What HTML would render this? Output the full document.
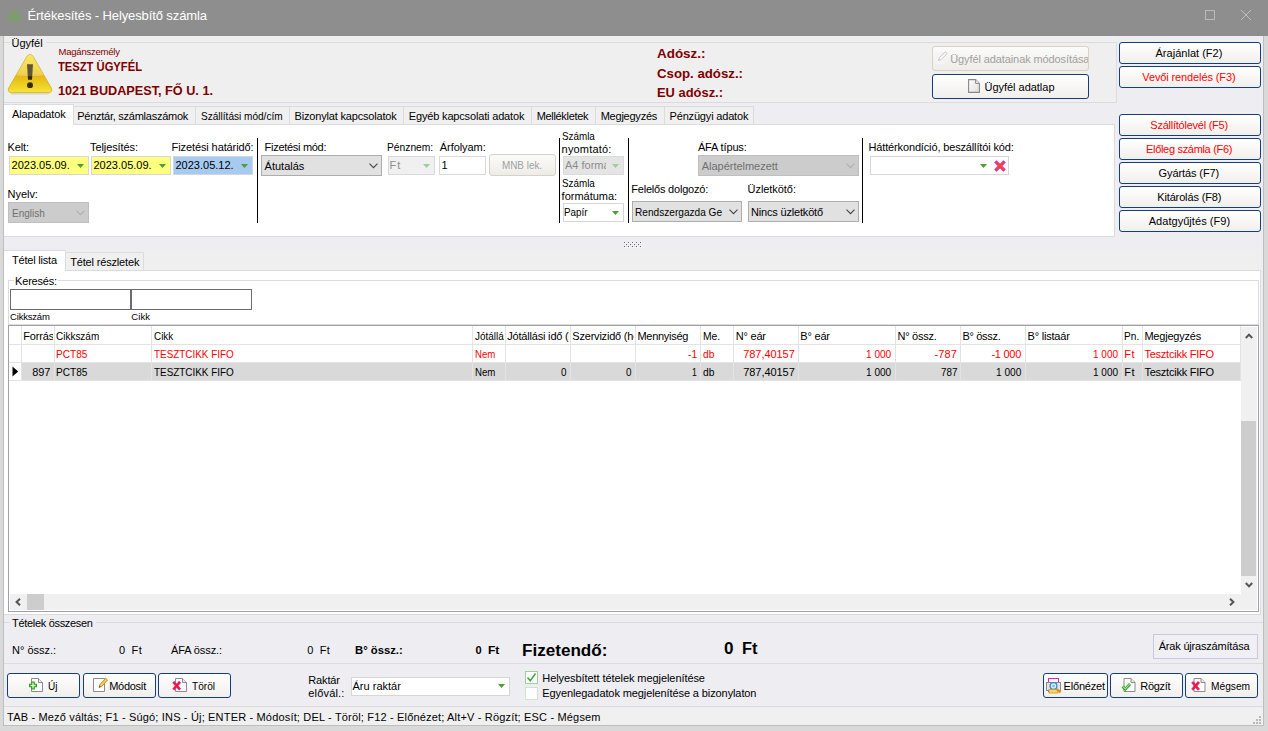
<!DOCTYPE html>
<html><head><meta charset="utf-8"><title>Értékesítés - Helyesbítő számla</title>
<style>
html,body{margin:0;padding:0;background:#dcdcdc;}
body{width:1268px;height:731px;overflow:hidden;font-family:"Liberation Sans", sans-serif;font-size:11px;}
#win{position:relative;width:1268px;height:731px;overflow:hidden;}
#win div,#win svg{position:absolute;}
#win .t{font-family:"Liberation Sans", sans-serif;}
</style></head><body>
<div id="win">
<div style="left:0px;top:0px;width:1268px;height:731px;background:#d9d9d9;"></div>
<div style="left:3px;top:36px;width:1261px;height:690px;background:#bebebe;"></div>
<div style="left:4px;top:36px;width:1259px;height:689px;background:#ededf2;"></div>
<div style="left:0px;top:0px;width:1268px;height:36px;background:#8e8e8e;"></div>
<div class="t" style="top:8px;font-size:13px;line-height:15px;color:#fff;white-space:nowrap;letter-spacing:-0.110px;left:27.5px;">Értékesítés - Helyesbítő számla</div>
<svg style="left:6px;top:8px" width="16" height="16" viewBox="0 0 16 16"><g fill="none" stroke="#6cae4a" stroke-width="1.25" stroke-linecap="round"><path d="M3.5 4.5 Q8 9.5 12.5 4.5"/><path d="M8 7.5 V13.5"/><path d="M2 8.5 Q5 8 6.5 13"/><path d="M14 8.5 Q11 8 9.5 13"/></g><g fill="#6cae4a"><circle cx="6.3" cy="2.6" r="0.9"/><circle cx="9.7" cy="2.6" r="0.9"/><circle cx="1.6" cy="11.6" r="0.8"/><circle cx="14.4" cy="11.6" r="0.8"/><circle cx="3.6" cy="13.6" r="0.8"/><circle cx="12.4" cy="13.6" r="0.8"/></g></svg>
<div style="left:1205px;top:10px;width:10px;height:10px;border:1px solid #b9b9b9;box-sizing:border-box;"></div>
<svg style="left:1240px;top:9px" width="12" height="12" viewBox="0 0 12 12"><path d="M1 1 L11 11 M11 1 L1 11" stroke="#bdbdbd" stroke-width="1" fill="none"/></svg>
<div style="left:4px;top:36px;width:1113px;height:67px;background:#efefef;"></div>
<div style="left:4px;top:42px;width:1113px;height:61px;border:1px solid #dcdcdc;border-left:none;box-sizing:border-box;"></div>
<div style="left:10px;top:36px;width:36px;height:14px;background:#efefef;"></div>
<div class="t" style="top:37px;font-size:11px;line-height:12px;color:#000;white-space:nowrap;left:11.5px;">Ügyfél</div>
<svg style="left:6px;top:52px" width="48" height="44" viewBox="0 0 48 44">
<defs><linearGradient id="wg" x1="0" y1="0" x2="0" y2="1"><stop offset="0" stop-color="#f6e23e"/><stop offset="0.5" stop-color="#edc62c"/><stop offset="0.57" stop-color="#e5b716"/><stop offset="0.9" stop-color="#f2da2a"/><stop offset="1" stop-color="#f5e440"/></linearGradient>
<clipPath id="wc"><path d="M24 2.5 Q26 2.5 27.2 4.6 L45.2 35.8 Q47 40.5 42.5 40.6 L5.5 40.6 Q1 40.5 2.8 35.8 L20.8 4.6 Q22 2.5 24 2.5 Z"/></clipPath></defs>
<path d="M6 41.2 H42 Q45 41.6 42 42.6 H6 Q3 41.6 6 41.2 Z" fill="#9a9aa0" opacity="0.35"/>
<path d="M24 2.5 Q26 2.5 27.2 4.6 L45.2 35.8 Q47 40.5 42.5 40.6 L5.5 40.6 Q1 40.5 2.8 35.8 L20.8 4.6 Q22 2.5 24 2.5 Z" fill="url(#wg)" stroke="#d6b422" stroke-width="0.9"/>
<path d="M21 12.3 H27 L26 27.8 H22 Z" fill="#342c00"/>
<ellipse cx="24" cy="33.2" rx="3" ry="2.9" fill="#342c00"/>
<path d="M0 0 H48 V21 Q24 27.5 0 21 Z" fill="#fff" opacity="0.2" clip-path="url(#wc)"/>
</svg>
<div class="t" style="top:46px;font-size:9.5px;line-height:11px;color:#800000;white-space:nowrap;letter-spacing:-0.217px;left:58.5px;">Magánszemély</div>
<div class="t" style="top:60px;font-size:12px;line-height:14px;color:#800000;white-space:nowrap;font-weight:bold;left:58px;"><span style="display:inline-block;transform:scaleX(0.9333);transform-origin:0 0;">TESZT ÜGYFÉL</span></div>
<div class="t" style="top:84px;font-size:12px;line-height:14px;color:#800000;white-space:nowrap;font-weight:bold;left:58px;"><span style="display:inline-block;transform:scaleX(1.0564);transform-origin:0 0;">1021 BUDAPEST, FŐ U. 1.</span></div>
<div class="t" style="top:47px;font-size:12px;line-height:14px;color:#800000;white-space:nowrap;font-weight:bold;left:657px;"><span style="display:inline-block;transform:scaleX(1.1190);transform-origin:0 0;">Adósz.:</span></div>
<div class="t" style="top:67px;font-size:12px;line-height:14px;color:#800000;white-space:nowrap;font-weight:bold;left:657px;"><span style="display:inline-block;transform:scaleX(1.1023);transform-origin:0 0;">Csop. adósz.:</span></div>
<div class="t" style="top:86px;font-size:12px;line-height:14px;color:#800000;white-space:nowrap;font-weight:bold;left:657px;"><span style="display:inline-block;transform:scaleX(1.0759);transform-origin:0 0;">EU adósz.:</span></div>
<div style="left:932px;top:46px;width:157px;height:25px;border:1px solid #d8d1c6;border-radius:3px;box-sizing:border-box;background:linear-gradient(#fbfbfb,#eeece8);"></div>
<svg style="left:934px;top:50px" width="15" height="15" viewBox="0 0 15 15"><rect x="1" y="2" width="10" height="12" fill="#f4f4f4"/><path d="M4.5 10.5 L5.3 7.8 L11.3 1.8 L13.2 3.6 L7.2 9.6 Z" fill="#f8f8f8" stroke="#c2c2c2" stroke-width="0.9"/></svg>
<div class="t" style="top:53px;font-size:11px;line-height:12px;color:#a0a0a0;white-space:nowrap;letter-spacing:-0.099px;left:950.2px;width:137.5px;overflow:hidden;">Ügyfél adatainak módosítása</div>
<div style="left:932px;top:74px;width:157px;height:25px;border:1px solid #123f7a;border-radius:3px;box-sizing:border-box;background:linear-gradient(#ffffff,#f1efec);"></div>
<svg style="left:968px;top:79px" width="12" height="14" viewBox="0 0 12 14"><defs><linearGradient id="dg" x1="0" y1="0" x2="1" y2="1"><stop offset="0" stop-color="#ffffff"/><stop offset="1" stop-color="#dedede"/></linearGradient></defs><path d="M0.6 0.6 H7.6 L11.4 4.4 V13.4 H0.6 Z" fill="url(#dg)" stroke="#888" stroke-width="1.1"/><path d="M7.6 0.6 V4.4 H11.4" fill="#eee" stroke="#888" stroke-width="1"/></svg>
<div class="t" style="top:81px;font-size:11px;line-height:12px;color:#000;white-space:nowrap;letter-spacing:-0.025px;left:984.5px;">Ügyfél adatlap</div>
<div style="left:1119px;top:42px;width:142px;height:22px;border:1px solid #123f7a;border-radius:3px;box-sizing:border-box;background:linear-gradient(#ffffff,#f1efec);"></div>
<div class="t" style="top:47px;font-size:11px;line-height:12px;color:#000;white-space:nowrap;letter-spacing:0.020px;left:1155.5px;">Árajánlat (F2)</div>
<div style="left:1119px;top:66px;width:142px;height:22px;border:1px solid #123f7a;border-radius:3px;box-sizing:border-box;background:linear-gradient(#ffffff,#f1efec);"></div>
<div class="t" style="top:71px;font-size:11px;line-height:12px;color:#ff0000;white-space:nowrap;letter-spacing:-0.116px;left:1142.3px;">Vevői rendelés (F3)</div>
<div style="left:1119px;top:114px;width:142px;height:22px;border:1px solid #123f7a;border-radius:3px;box-sizing:border-box;background:linear-gradient(#ffffff,#f1efec);"></div>
<div class="t" style="top:119px;font-size:11px;line-height:12px;color:#ff0000;white-space:nowrap;letter-spacing:-0.242px;left:1150.3px;">Szállítólevél (F5)</div>
<div style="left:1119px;top:138px;width:142px;height:22px;border:1px solid #123f7a;border-radius:3px;box-sizing:border-box;background:linear-gradient(#ffffff,#f1efec);"></div>
<div class="t" style="top:143px;font-size:11px;line-height:12px;color:#ff0000;white-space:nowrap;letter-spacing:-0.312px;left:1146px;">Előleg számla (F6)</div>
<div style="left:1119px;top:162px;width:142px;height:22px;border:1px solid #123f7a;border-radius:3px;box-sizing:border-box;background:linear-gradient(#ffffff,#f1efec);"></div>
<div class="t" style="top:167px;font-size:11px;line-height:12px;color:#000;white-space:nowrap;letter-spacing:-0.103px;left:1158.6px;">Gyártás (F7)</div>
<div style="left:1119px;top:186px;width:142px;height:22px;border:1px solid #123f7a;border-radius:3px;box-sizing:border-box;background:linear-gradient(#ffffff,#f1efec);"></div>
<div class="t" style="top:191px;font-size:11px;line-height:12px;color:#000;white-space:nowrap;letter-spacing:-0.133px;left:1157.2px;">Kitárolás (F8)</div>
<div style="left:1119px;top:210px;width:142px;height:22px;border:1px solid #123f7a;border-radius:3px;box-sizing:border-box;background:linear-gradient(#ffffff,#f1efec);"></div>
<div class="t" style="top:215px;font-size:11px;line-height:12px;color:#000;white-space:nowrap;letter-spacing:0.046px;left:1148.7px;">Adatgyűjtés (F9)</div>
<div style="left:4px;top:124px;width:1111px;height:113px;background:#fff;border:1px solid #dcdcdc;border-left:none;box-sizing:border-box;"></div>
<div style="left:4px;top:104px;width:70px;height:21px;background:#fff;border:1px solid #dcdcdc;border-bottom:none;border-left:none;box-sizing:border-box;"></div>
<div class="t" style="top:108px;font-size:11px;line-height:12px;color:#000;white-space:nowrap;letter-spacing:-0.150px;left:12px;">Alapadatok</div>
<div style="left:73px;top:106px;width:122.5px;height:19px;background:#f0f0f0;border:1px solid #dcdcdc;box-sizing:border-box;"></div>
<div class="t" style="top:110px;font-size:11px;line-height:12px;color:#000;white-space:nowrap;letter-spacing:-0.253px;left:77.2px;">Pénztár, számlaszámok</div>
<div style="left:194.5px;top:106px;width:95.0px;height:19px;background:#f0f0f0;border:1px solid #dcdcdc;box-sizing:border-box;"></div>
<div class="t" style="top:110px;font-size:11px;line-height:12px;color:#000;white-space:nowrap;left:200.6px;"><span style="display:inline-block;transform:scaleX(0.9143);transform-origin:0 0;">Szállítási mód/cím</span></div>
<div style="left:288.5px;top:106px;width:115.5px;height:19px;background:#f0f0f0;border:1px solid #dcdcdc;box-sizing:border-box;"></div>
<div class="t" style="top:110px;font-size:11px;line-height:12px;color:#000;white-space:nowrap;letter-spacing:-0.184px;left:294.6px;">Bizonylat kapcsolatok</div>
<div style="left:403px;top:106px;width:128.5px;height:19px;background:#f0f0f0;border:1px solid #dcdcdc;box-sizing:border-box;"></div>
<div class="t" style="top:110px;font-size:11px;line-height:12px;color:#000;white-space:nowrap;letter-spacing:-0.166px;left:408.8px;">Egyéb kapcsolati adatok</div>
<div style="left:530.5px;top:106px;width:65.0px;height:19px;background:#f0f0f0;border:1px solid #dcdcdc;box-sizing:border-box;"></div>
<div class="t" style="top:110px;font-size:11px;line-height:12px;color:#000;white-space:nowrap;letter-spacing:-0.323px;left:536.7px;">Mellékletek</div>
<div style="left:594.5px;top:106px;width:70.0px;height:19px;background:#f0f0f0;border:1px solid #dcdcdc;box-sizing:border-box;"></div>
<div class="t" style="top:110px;font-size:11px;line-height:12px;color:#000;white-space:nowrap;letter-spacing:-0.234px;left:600.7px;">Megjegyzés</div>
<div style="left:663.5px;top:106px;width:90.0px;height:19px;background:#f0f0f0;border:1px solid #dcdcdc;box-sizing:border-box;"></div>
<div class="t" style="top:110px;font-size:11px;line-height:12px;color:#000;white-space:nowrap;letter-spacing:-0.182px;left:669.6px;">Pénzügyi adatok</div>
<div class="t" style="top:141px;font-size:11px;line-height:12px;color:#000;white-space:nowrap;letter-spacing:-0.154px;left:7.6px;">Kelt:</div>
<div class="t" style="top:141px;font-size:11px;line-height:12px;color:#000;white-space:nowrap;letter-spacing:-0.102px;left:90.1px;">Teljesítés:</div>
<div class="t" style="top:141px;font-size:11px;line-height:12px;color:#000;white-space:nowrap;letter-spacing:-0.104px;left:171.6px;">Fizetési határidő:</div>
<div style="left:9px;top:156px;width:80px;height:19px;background:#ffff80;border:1px solid #d6d6dc;box-sizing:border-box;"></div>
<div class="t" style="top:159px;font-size:11px;line-height:12px;color:#000;white-space:nowrap;letter-spacing:0.008px;left:11.5px;">2023.05.09.</div>
<svg style="left:77px;top:164px" width="7" height="4" viewBox="0 0 7 4"><path d="M0 0 H7 L3.5 4 Z" fill="#4a9e34"/></svg>
<div style="left:91px;top:156px;width:80px;height:19px;background:#ffff80;border:1px solid #d6d6dc;box-sizing:border-box;"></div>
<div class="t" style="top:159px;font-size:11px;line-height:12px;color:#000;white-space:nowrap;letter-spacing:0.007px;left:93.5px;">2023.05.09.</div>
<svg style="left:159px;top:164px" width="7" height="4" viewBox="0 0 7 4"><path d="M0 0 H7 L3.5 4 Z" fill="#4a9e34"/></svg>
<div style="left:173px;top:156px;width:80px;height:19px;background:#a6caf0;border:1px solid #d6d6dc;box-sizing:border-box;"></div>
<div class="t" style="top:159px;font-size:11px;line-height:12px;color:#000;white-space:nowrap;letter-spacing:0.007px;left:175.5px;">2023.05.12.</div>
<svg style="left:241px;top:164px" width="7" height="4" viewBox="0 0 7 4"><path d="M0 0 H7 L3.5 4 Z" fill="#4a9e34"/></svg>
<div class="t" style="top:188px;font-size:11px;line-height:12px;color:#000;white-space:nowrap;letter-spacing:-0.053px;left:7.6px;">Nyelv:</div>
<div style="left:8px;top:202px;width:81px;height:21px;background:#cccccc;border:1px solid #bfbfbf;box-sizing:border-box;"></div>
<div class="t" style="top:207px;font-size:11px;line-height:12px;color:#707070;white-space:nowrap;left:11.6px;"><span style="display:inline-block;transform:scaleX(0.9091);transform-origin:0 0;">English</span></div>
<svg style="left:75.5px;top:210px" width="9" height="6" viewBox="0 0 9 6"><path d="M0.5 0.7 L4.5 4.7 L8.5 0.7" fill="none" stroke="#b0b0b0" stroke-width="1.1"/></svg>
<div style="left:257px;top:138px;width:1px;height:85px;background:#000;"></div>
<div style="left:559px;top:138px;width:1px;height:85px;background:#000;"></div>
<div style="left:628px;top:138px;width:1px;height:85px;background:#000;"></div>
<div style="left:862px;top:138px;width:1px;height:85px;background:#000;"></div>
<div class="t" style="top:141px;font-size:11px;line-height:12px;color:#000;white-space:nowrap;letter-spacing:-0.293px;left:264.6px;">Fizetési mód:</div>
<div style="left:261px;top:155px;width:121px;height:21px;background:#e1e1e1;border:1px solid #adadad;box-sizing:border-box;"></div>
<div class="t" style="top:160px;font-size:11px;line-height:12px;color:#000;white-space:nowrap;letter-spacing:-0.007px;left:264.6px;">Átutalás</div>
<svg style="left:368.5px;top:163px" width="9" height="6" viewBox="0 0 9 6"><path d="M0.5 0.7 L4.5 4.7 L8.5 0.7" fill="none" stroke="#444" stroke-width="1.1"/></svg>
<div class="t" style="top:141px;font-size:11px;line-height:12px;color:#000;white-space:nowrap;left:386.5px;"><span style="display:inline-block;transform:scaleX(0.9327);transform-origin:0 0;">Pénznem:</span></div>
<div style="left:388px;top:156px;width:47px;height:19px;background:#f0f0f0;border:1px solid #d9d9d9;box-sizing:border-box;"></div>
<div class="t" style="top:159px;font-size:11px;line-height:12px;color:#8c8c8c;white-space:nowrap;letter-spacing:0.819px;left:389.6px;">Ft</div>
<svg style="left:423px;top:164px" width="7" height="4" viewBox="0 0 7 4"><path d="M0 0 H7 L3.5 4 Z" fill="#9ccf9c"/></svg>
<div class="t" style="top:141px;font-size:11px;line-height:12px;color:#000;white-space:nowrap;letter-spacing:-0.071px;left:439.8px;">Árfolyam:</div>
<div style="left:439px;top:156px;width:47px;height:19px;background:#fff;border:1px solid #d9d9d9;box-sizing:border-box;"></div>
<div class="t" style="top:159px;font-size:11px;line-height:12px;color:#000;white-space:nowrap;left:441.5px;">1</div>
<div style="left:489px;top:154px;width:67px;height:22px;border:1px solid #d8d1c6;border-radius:3px;box-sizing:border-box;background:linear-gradient(#fbfbfb,#eeece8);"></div>
<div class="t" style="top:159px;font-size:11px;line-height:12px;color:#a0a0a0;white-space:nowrap;left:501.6px;"><span style="display:inline-block;transform:scaleX(0.8986);transform-origin:0 0;">MNB lek.</span></div>
<div class="t" style="top:130px;font-size:11px;line-height:12px;color:#000;white-space:nowrap;left:561.6px;"><span style="display:inline-block;transform:scaleX(0.8940);transform-origin:0 0;">Számla</span></div>
<div class="t" style="top:143px;font-size:11px;line-height:12px;color:#000;white-space:nowrap;letter-spacing:0.173px;left:561.6px;">nyomtató:</div>
<div style="left:563px;top:156px;width:61px;height:19px;background:#e4e4e4;border:1px solid #dcdcdc;box-sizing:border-box;overflow:hidden;"></div>
<div class="t" style="top:159px;font-size:11px;line-height:12px;color:#8c8c8c;white-space:nowrap;left:565px;width:41px;overflow:hidden;">A4 formá</div>
<svg style="left:612px;top:164px" width="7" height="4" viewBox="0 0 7 4"><path d="M0 0 H7 L3.5 4 Z" fill="#9ccf9c"/></svg>
<div class="t" style="top:177px;font-size:11px;line-height:12px;color:#000;white-space:nowrap;left:561.6px;"><span style="display:inline-block;transform:scaleX(0.8940);transform-origin:0 0;">Számla</span></div>
<div class="t" style="top:190px;font-size:11px;line-height:12px;color:#000;white-space:nowrap;letter-spacing:-0.016px;left:561.6px;">formátuma:</div>
<div style="left:563px;top:203px;width:61px;height:19px;background:#fff;border:1px solid #d6d6d6;box-sizing:border-box;"></div>
<div class="t" style="top:206px;font-size:11px;line-height:12px;color:#000;white-space:nowrap;left:564.4px;"><span style="display:inline-block;transform:scaleX(0.8936);transform-origin:0 0;">Papír</span></div>
<svg style="left:612px;top:211px" width="7" height="4" viewBox="0 0 7 4"><path d="M0 0 H7 L3.5 4 Z" fill="#4a9e34"/></svg>
<div class="t" style="top:141px;font-size:11px;line-height:12px;color:#000;white-space:nowrap;letter-spacing:-0.138px;left:697.9px;">ÁFA típus:</div>
<div style="left:698px;top:155px;width:161px;height:21px;background:#cccccc;border:1px solid #bfbfbf;box-sizing:border-box;"></div>
<div class="t" style="top:160px;font-size:11px;line-height:12px;color:#707070;white-space:nowrap;letter-spacing:-0.017px;left:701.7px;">Alapértelmezett</div>
<svg style="left:845.5px;top:163px" width="9" height="6" viewBox="0 0 9 6"><path d="M0.5 0.7 L4.5 4.7 L8.5 0.7" fill="none" stroke="#b0b0b0" stroke-width="1.1"/></svg>
<div class="t" style="top:183px;font-size:11px;line-height:12px;color:#000;white-space:nowrap;letter-spacing:-0.214px;left:631.3px;">Felelős dolgozó:</div>
<div style="left:632px;top:201px;width:110px;height:21px;background:#e1e1e1;border:1px solid #adadad;box-sizing:border-box;"></div>
<div class="t" style="top:206px;font-size:11px;line-height:12px;color:#000;white-space:nowrap;left:635.3px;width:87.5px;overflow:hidden;"><span style="display:inline-block;transform:scaleX(0.9191);transform-origin:0 0;">Rendszergazda Ge</span></div>
<svg style="left:728.5px;top:209px" width="9" height="6" viewBox="0 0 9 6"><path d="M0.5 0.7 L4.5 4.7 L8.5 0.7" fill="none" stroke="#444" stroke-width="1.1"/></svg>
<div class="t" style="top:183px;font-size:11px;line-height:12px;color:#000;white-space:nowrap;letter-spacing:-0.058px;left:747.6px;">Üzletkötő:</div>
<div style="left:748px;top:201px;width:111px;height:21px;background:#e1e1e1;border:1px solid #adadad;box-sizing:border-box;"></div>
<div class="t" style="top:206px;font-size:11px;line-height:12px;color:#000;white-space:nowrap;letter-spacing:-0.185px;left:751.1px;">Nincs üzletkötő</div>
<svg style="left:845.5px;top:209px" width="9" height="6" viewBox="0 0 9 6"><path d="M0.5 0.7 L4.5 4.7 L8.5 0.7" fill="none" stroke="#444" stroke-width="1.1"/></svg>
<div class="t" style="top:141px;font-size:11px;line-height:12px;color:#000;white-space:nowrap;letter-spacing:-0.146px;left:868.5px;">Háttérkondíció, beszállítói kód:</div>
<div style="left:870px;top:156px;width:139px;height:19px;background:#fff;border:1px solid #d6d6d6;box-sizing:border-box;"></div>
<svg style="left:980px;top:164px" width="7" height="4" viewBox="0 0 7 4"><path d="M0 0 H7 L3.5 4 Z" fill="#4a9e34"/></svg>
<svg style="left:994px;top:160px" width="12" height="12" viewBox="0 0 12 12"><path d="M2.6 2.6 L9.4 9.4 M9.4 2.6 L2.6 9.4" stroke="#e614e0" stroke-width="3.4" stroke-linecap="square"/><path d="M2.6 2.6 L9.4 9.4 M9.4 2.6 L2.6 9.4" stroke="#f0501c" stroke-width="1.9" stroke-linecap="square"/></svg>
<svg style="left:624px;top:242px" width="19" height="7" viewBox="0 0 19 7"><rect x="1" y="1" width="1" height="1" fill="#fbfbfb"/><rect x="0" y="0" width="1" height="1" fill="#666"/><rect x="5" y="1" width="1" height="1" fill="#fbfbfb"/><rect x="4" y="0" width="1" height="1" fill="#666"/><rect x="9" y="1" width="1" height="1" fill="#fbfbfb"/><rect x="8" y="0" width="1" height="1" fill="#666"/><rect x="13" y="1" width="1" height="1" fill="#fbfbfb"/><rect x="12" y="0" width="1" height="1" fill="#666"/><rect x="17" y="1" width="1" height="1" fill="#fbfbfb"/><rect x="16" y="0" width="1" height="1" fill="#666"/><rect x="3" y="3" width="1" height="1" fill="#fbfbfb"/><rect x="2" y="2" width="1" height="1" fill="#666"/><rect x="7" y="3" width="1" height="1" fill="#fbfbfb"/><rect x="6" y="2" width="1" height="1" fill="#666"/><rect x="11" y="3" width="1" height="1" fill="#fbfbfb"/><rect x="10" y="2" width="1" height="1" fill="#666"/><rect x="15" y="3" width="1" height="1" fill="#fbfbfb"/><rect x="14" y="2" width="1" height="1" fill="#666"/><rect x="1" y="5" width="1" height="1" fill="#fbfbfb"/><rect x="0" y="4" width="1" height="1" fill="#666"/><rect x="5" y="5" width="1" height="1" fill="#fbfbfb"/><rect x="4" y="4" width="1" height="1" fill="#666"/><rect x="9" y="5" width="1" height="1" fill="#fbfbfb"/><rect x="8" y="4" width="1" height="1" fill="#666"/><rect x="13" y="5" width="1" height="1" fill="#fbfbfb"/><rect x="12" y="4" width="1" height="1" fill="#666"/><rect x="17" y="5" width="1" height="1" fill="#fbfbfb"/><rect x="16" y="4" width="1" height="1" fill="#666"/></svg>
<div style="left:4px;top:250px;width:1257px;height:21px;background:#efefef;"></div>
<div style="left:4px;top:270px;width:1257px;height:345px;background:#fff;border:1px solid #dcdcdc;border-left:none;box-sizing:border-box;"></div>
<div style="left:4px;top:250px;width:62px;height:21px;background:#fff;border:1px solid #dcdcdc;border-bottom:none;border-left:none;box-sizing:border-box;"></div>
<div class="t" style="top:254px;font-size:11px;line-height:12px;color:#000;white-space:nowrap;letter-spacing:-0.208px;left:12.1px;">Tétel lista</div>
<div style="left:65px;top:252px;width:79px;height:19px;background:#f0f0f0;border:1px solid #dcdcdc;box-sizing:border-box;"></div>
<div class="t" style="top:256px;font-size:11px;line-height:12px;color:#000;white-space:nowrap;letter-spacing:-0.167px;left:70.2px;">Tétel részletek</div>
<div style="left:8px;top:280px;width:1251px;height:45px;border:1px solid #dcdcdc;box-sizing:border-box;"></div>
<div style="left:14px;top:274px;width:44px;height:12px;background:#fff;"></div>
<div class="t" style="top:275px;font-size:11px;line-height:12px;color:#000;white-space:nowrap;letter-spacing:-0.203px;left:15.1px;">Keresés:</div>
<div style="left:10px;top:289px;width:121px;height:21px;background:#fff;border:1px solid #6b6b6b;box-sizing:border-box;"></div>
<div style="left:131px;top:289px;width:121px;height:21px;background:#fff;border:1px solid #6b6b6b;box-sizing:border-box;"></div>
<div class="t" style="top:311px;font-size:9.5px;line-height:11px;color:#000;white-space:nowrap;letter-spacing:-0.210px;left:10.1px;">Cikkszám</div>
<div class="t" style="top:311px;font-size:9.5px;line-height:11px;color:#000;white-space:nowrap;letter-spacing:0.072px;left:131.3px;">Cikk</div>
<div style="left:8px;top:325px;width:1251px;height:287px;background:#fff;border:1px solid #a0a0a8;box-sizing:border-box;"></div>
<div style="left:21px;top:362px;width:1219.5px;height:19px;background:#d9d9d9;"></div>
<div style="left:9px;top:344px;width:1231.5px;height:1px;background:#e3e3e3;"></div>
<div style="left:9px;top:362px;width:1231.5px;height:1px;background:#e3e3e3;"></div>
<div style="left:9px;top:380px;width:1231.5px;height:1px;background:#e3e3e3;"></div>
<div style="left:20.5px;top:326px;width:1px;height:55px;background:#e3e3e3;"></div>
<div style="left:53.5px;top:326px;width:1px;height:55px;background:#e3e3e3;"></div>
<div style="left:151.0px;top:326px;width:1px;height:55px;background:#e3e3e3;"></div>
<div style="left:472.0px;top:326px;width:1px;height:55px;background:#e3e3e3;"></div>
<div style="left:504.5px;top:326px;width:1px;height:55px;background:#e3e3e3;"></div>
<div style="left:569.5px;top:326px;width:1px;height:55px;background:#e3e3e3;"></div>
<div style="left:634.5px;top:326px;width:1px;height:55px;background:#e3e3e3;"></div>
<div style="left:700.0px;top:326px;width:1px;height:55px;background:#e3e3e3;"></div>
<div style="left:733.0px;top:326px;width:1px;height:55px;background:#e3e3e3;"></div>
<div style="left:797.5px;top:326px;width:1px;height:55px;background:#e3e3e3;"></div>
<div style="left:895.0px;top:326px;width:1px;height:55px;background:#e3e3e3;"></div>
<div style="left:959.5px;top:326px;width:1px;height:55px;background:#e3e3e3;"></div>
<div style="left:1025.0px;top:326px;width:1px;height:55px;background:#e3e3e3;"></div>
<div style="left:1121.5px;top:326px;width:1px;height:55px;background:#e3e3e3;"></div>
<div style="left:1142.0px;top:326px;width:1px;height:55px;background:#e3e3e3;"></div>
<div style="left:1240.0px;top:326px;width:1px;height:55px;background:#e3e3e3;"></div>
<div class="t" style="top:330px;font-size:11px;line-height:12px;color:#000;white-space:nowrap;letter-spacing:-0.120px;left:23.2px;width:30.3px;overflow:hidden;">Forrás</div>
<div class="t" style="top:330px;font-size:11px;line-height:12px;color:#000;white-space:nowrap;left:56px;width:95.0px;overflow:hidden;"><span style="display:inline-block;transform:scaleX(0.9062);transform-origin:0 0;">Cikkszám</span></div>
<div class="t" style="top:330px;font-size:11px;line-height:12px;color:#000;white-space:nowrap;left:153.5px;width:318.5px;overflow:hidden;"><span style="display:inline-block;transform:scaleX(0.8976);transform-origin:0 0;">Cikk</span></div>
<div class="t" style="top:330px;font-size:11px;line-height:12px;color:#000;white-space:nowrap;left:474.6px;width:29.9px;overflow:hidden;"><span style="display:inline-block;transform:scaleX(0.9026);transform-origin:0 0;">Jótállás</span></div>
<div class="t" style="top:330px;font-size:11px;line-height:12px;color:#000;white-space:nowrap;letter-spacing:-0.186px;left:507.2px;width:62.3px;overflow:hidden;">Jótállási idő (hó)</div>
<div class="t" style="top:330px;font-size:11px;line-height:12px;color:#000;white-space:nowrap;letter-spacing:-0.207px;left:572.3px;width:62.2px;overflow:hidden;">Szervizidő (hó)</div>
<div class="t" style="top:330px;font-size:11px;line-height:12px;color:#000;white-space:nowrap;letter-spacing:-0.263px;left:637.4px;width:62.6px;overflow:hidden;">Mennyiség</div>
<div class="t" style="top:330px;font-size:11px;line-height:12px;color:#000;white-space:nowrap;left:702.6px;width:30.4px;overflow:hidden;"><span style="display:inline-block;transform:scaleX(0.9376);transform-origin:0 0;">Me.</span></div>
<div class="t" style="top:330px;font-size:11px;line-height:12px;color:#000;white-space:nowrap;letter-spacing:-0.203px;left:735.7px;width:61.8px;overflow:hidden;">N° eár</div>
<div class="t" style="top:330px;font-size:11px;line-height:12px;color:#000;white-space:nowrap;letter-spacing:-0.201px;left:800.3px;width:94.7px;overflow:hidden;">B° eár</div>
<div class="t" style="top:330px;font-size:11px;line-height:12px;color:#000;white-space:nowrap;letter-spacing:-0.268px;left:897.5px;width:62.0px;overflow:hidden;">N° össz.</div>
<div class="t" style="top:330px;font-size:11px;line-height:12px;color:#000;white-space:nowrap;letter-spacing:-0.296px;left:962.4px;width:62.6px;overflow:hidden;">B° össz.</div>
<div class="t" style="top:330px;font-size:11px;line-height:12px;color:#000;white-space:nowrap;letter-spacing:-0.205px;left:1027.5px;width:94.0px;overflow:hidden;">B° listaár</div>
<div class="t" style="top:330px;font-size:11px;line-height:12px;color:#000;white-space:nowrap;left:1124.3px;width:17.7px;overflow:hidden;"><span style="display:inline-block;transform:scaleX(0.9203);transform-origin:0 0;">Pn.</span></div>
<div class="t" style="top:330px;font-size:11px;line-height:12px;color:#000;white-space:nowrap;letter-spacing:-0.211px;left:1144.4px;width:95.6px;overflow:hidden;">Megjegyzés</div>
<div class="t" style="top:348px;font-size:11px;line-height:12px;color:#ff0000;white-space:nowrap;left:56px;"><span style="display:inline-block;transform:scaleX(0.9168);transform-origin:0 0;">PCT85</span></div>
<div class="t" style="top:348px;font-size:11px;line-height:12px;color:#ff0000;white-space:nowrap;left:153.5px;"><span style="display:inline-block;transform:scaleX(0.9004);transform-origin:0 0;">TESZTCIKK FIFO</span></div>
<div class="t" style="top:348px;font-size:11px;line-height:12px;color:#ff0000;white-space:nowrap;left:474.6px;"><span style="display:inline-block;transform:scaleX(0.8780);transform-origin:0 0;">Nem</span></div>
<div class="t" style="top:348px;font-size:11px;line-height:12px;color:#ff0000;white-space:nowrap;left:687.5px;"><span style="display:inline-block;transform:scaleX(0.9304);transform-origin:0 0;">-1</span></div>
<div class="t" style="top:348px;font-size:11px;line-height:12px;color:#ff0000;white-space:nowrap;left:702.6px;"><span style="display:inline-block;transform:scaleX(0.9306);transform-origin:0 0;">db</span></div>
<div class="t" style="top:348px;font-size:11px;line-height:12px;color:#ff0000;white-space:nowrap;letter-spacing:-0.050px;left:743.2px;">787,40157</div>
<div class="t" style="top:348px;font-size:11px;line-height:12px;color:#ff0000;white-space:nowrap;left:866px;"><span style="display:inline-block;transform:scaleX(0.9153);transform-origin:0 0;">1 000</span></div>
<div class="t" style="top:348px;font-size:11px;line-height:12px;color:#ff0000;white-space:nowrap;letter-spacing:0.090px;left:934.6px;">-787</div>
<div class="t" style="top:348px;font-size:11px;line-height:12px;color:#ff0000;white-space:nowrap;letter-spacing:-0.261px;left:991.4px;">-1 000</div>
<div class="t" style="top:348px;font-size:11px;line-height:12px;color:#ff0000;white-space:nowrap;left:1093px;"><span style="display:inline-block;transform:scaleX(0.9081);transform-origin:0 0;">1 000</span></div>
<div class="t" style="top:348px;font-size:11px;line-height:12px;color:#ff0000;white-space:nowrap;letter-spacing:0.519px;left:1124.3px;">Ft</div>
<div class="t" style="top:348px;font-size:11px;line-height:12px;color:#ff0000;white-space:nowrap;letter-spacing:-0.233px;left:1144.4px;">Tesztcikk FIFO</div>
<div class="t" style="top:366px;font-size:11px;line-height:12px;color:#000;white-space:nowrap;letter-spacing:-0.080px;left:32.3px;">897</div>
<div class="t" style="top:366px;font-size:11px;line-height:12px;color:#000;white-space:nowrap;left:56px;"><span style="display:inline-block;transform:scaleX(0.9168);transform-origin:0 0;">PCT85</span></div>
<div class="t" style="top:366px;font-size:11px;line-height:12px;color:#000;white-space:nowrap;left:153.5px;"><span style="display:inline-block;transform:scaleX(0.9004);transform-origin:0 0;">TESZTCIKK FIFO</span></div>
<div class="t" style="top:366px;font-size:11px;line-height:12px;color:#000;white-space:nowrap;left:474.6px;"><span style="display:inline-block;transform:scaleX(0.8780);transform-origin:0 0;">Nem</span></div>
<div class="t" style="top:366px;font-size:11px;line-height:12px;color:#000;white-space:nowrap;left:560.8px;"><span style="display:inline-block;transform:scaleX(0.8980);transform-origin:0 0;">0</span></div>
<div class="t" style="top:366px;font-size:11px;line-height:12px;color:#000;white-space:nowrap;left:625.9px;"><span style="display:inline-block;transform:scaleX(0.8980);transform-origin:0 0;">0</span></div>
<div class="t" style="top:366px;font-size:11px;line-height:12px;color:#000;white-space:nowrap;left:691.8px;"><span style="display:inline-block;transform:scaleX(0.7837);transform-origin:0 0;">1</span></div>
<div class="t" style="top:366px;font-size:11px;line-height:12px;color:#000;white-space:nowrap;left:702.6px;"><span style="display:inline-block;transform:scaleX(0.9306);transform-origin:0 0;">db</span></div>
<div class="t" style="top:366px;font-size:11px;line-height:12px;color:#000;white-space:nowrap;letter-spacing:-0.050px;left:743.2px;">787,40157</div>
<div class="t" style="top:366px;font-size:11px;line-height:12px;color:#000;white-space:nowrap;left:866px;"><span style="display:inline-block;transform:scaleX(0.9153);transform-origin:0 0;">1 000</span></div>
<div class="t" style="top:366px;font-size:11px;line-height:12px;color:#000;white-space:nowrap;left:940.5px;"><span style="display:inline-block;transform:scaleX(0.8933);transform-origin:0 0;">787</span></div>
<div class="t" style="top:366px;font-size:11px;line-height:12px;color:#000;white-space:nowrap;left:996px;"><span style="display:inline-block;transform:scaleX(0.9190);transform-origin:0 0;">1 000</span></div>
<div class="t" style="top:366px;font-size:11px;line-height:12px;color:#000;white-space:nowrap;left:1093px;"><span style="display:inline-block;transform:scaleX(0.9081);transform-origin:0 0;">1 000</span></div>
<div class="t" style="top:366px;font-size:11px;line-height:12px;color:#000;white-space:nowrap;letter-spacing:0.519px;left:1124.3px;">Ft</div>
<div class="t" style="top:366px;font-size:11px;line-height:12px;color:#000;white-space:nowrap;letter-spacing:-0.233px;left:1144.4px;">Tesztcikk FIFO</div>
<svg style="left:12px;top:366px" width="7" height="11" viewBox="0 0 7 11"><path d="M0.5 0.5 L6.2 5.5 L0.5 10.5 Z" fill="#000"/></svg>
<div style="left:1241px;top:327px;width:16px;height:267px;background:#f0f0f0;"></div>
<div style="left:1241px;top:421px;width:15px;height:155px;background:#cdcdcd;"></div>
<div style="left:10px;top:594px;width:1247px;height:16px;background:#f0f0f0;"></div>
<div style="left:27px;top:594px;width:17px;height:16px;background:#cdcdcd;"></div>
<svg style="left:1245px;top:333px" width="8" height="6" viewBox="0 0 8 6"><path d="M0.8 5 L4 1.6 L7.2 5" fill="none" stroke="#555" stroke-width="2"/></svg>
<svg style="left:1245px;top:582px" width="8" height="6" viewBox="0 0 8 6"><path d="M0.8 1 L4 4.4 L7.2 1" fill="none" stroke="#555" stroke-width="2"/></svg>
<svg style="left:15px;top:598px" width="6" height="8" viewBox="0 0 6 8"><path d="M5 0.8 L1.6 4 L5 7.2" fill="none" stroke="#555" stroke-width="2"/></svg>
<svg style="left:1229px;top:598px" width="6" height="8" viewBox="0 0 6 8"><path d="M1 0.8 L4.4 4 L1 7.2" fill="none" stroke="#555" stroke-width="2"/></svg>
<div style="left:4px;top:622px;width:1259px;height:42px;border:1px solid #dcdcdc;border-left:none;border-right:none;box-sizing:border-box;"></div>
<div style="left:10px;top:616px;width:86px;height:13px;background:#ededf2;"></div>
<div class="t" style="top:617px;font-size:11px;line-height:12px;color:#000;white-space:nowrap;letter-spacing:-0.321px;left:12.1px;">Tételek összesen</div>
<div class="t" style="top:644px;font-size:11px;line-height:12px;color:#000;white-space:nowrap;letter-spacing:-0.030px;left:12.1px;">N° össz.:</div>
<div class="t" style="top:644px;font-size:11px;line-height:12px;color:#000;white-space:nowrap;right:1143.00px;text-align:right;">0</div>
<div class="t" style="top:644px;font-size:11px;line-height:12px;color:#000;white-space:nowrap;letter-spacing:0.519px;left:131.5px;">Ft</div>
<div class="t" style="top:644px;font-size:11px;line-height:12px;color:#000;white-space:nowrap;letter-spacing:-0.085px;left:170.9px;">ÁFA össz.:</div>
<div class="t" style="top:644px;font-size:11px;line-height:12px;color:#000;white-space:nowrap;right:954.70px;text-align:right;">0</div>
<div class="t" style="top:644px;font-size:11px;line-height:12px;color:#000;white-space:nowrap;letter-spacing:0.319px;left:319.7px;">Ft</div>
<div class="t" style="top:644px;font-size:11px;line-height:12px;color:#000;white-space:nowrap;font-weight:bold;left:355px;"><span style="display:inline-block;transform:scaleX(1.0241);transform-origin:0 0;">B° össz.:</span></div>
<div class="t" style="top:644px;font-size:11px;line-height:12px;color:#000;white-space:nowrap;font-weight:bold;right:786.50px;text-align:right;">0</div>
<div class="t" style="top:644px;font-size:11px;line-height:12px;color:#000;white-space:nowrap;font-weight:bold;left:488px;"><span style="display:inline-block;transform:scaleX(1.0971);transform-origin:0 0;">Ft</span></div>
<div class="t" style="top:642px;font-size:16px;line-height:17px;color:#000;white-space:nowrap;font-weight:bold;left:522.1px;"><span style="display:inline-block;transform:scaleX(1.0675);transform-origin:0 0;">Fizetendő:</span></div>
<div class="t" style="top:640px;font-size:16px;line-height:17px;color:#000;white-space:nowrap;font-weight:bold;left:724.1px;"><span style="display:inline-block;transform:scaleX(1.0667);transform-origin:0 0;">0</span></div>
<div class="t" style="top:640px;font-size:16px;line-height:17px;color:#000;white-space:nowrap;font-weight:bold;left:742.4px;"><span style="display:inline-block;transform:scaleX(1.0259);transform-origin:0 0;">Ft</span></div>
<div style="left:1153px;top:634px;width:105px;height:25px;border:1px solid #c9c9dc;box-sizing:border-box;background:#efeff4;"></div>
<div class="t" style="top:640px;font-size:11px;line-height:12px;color:#000;white-space:nowrap;letter-spacing:-0.192px;left:1158.7px;">Árak újraszámítása</div>
<div style="left:7px;top:673px;width:73px;height:25px;border:1px solid #123f7a;border-radius:3px;box-sizing:border-box;background:linear-gradient(#ffffff,#f1efec);"></div>
<svg style="left:26px;top:676px" width="20" height="18" viewBox="0 0 20 18"><g transform="translate(5,2)"><path d="M0.5 0.5 H7.5 L11.5 4.5 V13.5 H0.5 Z" fill="#fdfdfd" stroke="#8c8c8c" stroke-width="1"/><path d="M7.5 0.5 V4.5 H11.5" fill="#e8e8e8" stroke="#8c8c8c" stroke-width="1"/></g><path d="M7 5.5 V13.5 M3 9.5 H11" stroke="#2f9a22" stroke-width="3.6"/><path d="M7 6.6 V12.4 M4.1 9.5 H9.9" stroke="#8fe878" stroke-width="1.6"/><path d="M7 7.6 V11.4 M5.1 9.5 H8.9" stroke="#f4fff0" stroke-width="0.8"/></svg>
<div class="t" style="top:680px;font-size:11px;line-height:12px;color:#000;white-space:nowrap;left:48px;"><span style="display:inline-block;transform:scaleX(0.9143);transform-origin:0 0;">Új</span></div>
<div style="left:83px;top:673px;width:73px;height:25px;border:1px solid #123f7a;border-radius:3px;box-sizing:border-box;background:linear-gradient(#ffffff,#f1efec);"></div>
<svg style="left:90px;top:676px" width="20" height="18" viewBox="0 0 20 18"><path d="M3.5 2.5 H14.5 V15.5 H3.5 Z" fill="#fdfdfd" stroke="#8c8c8c" stroke-width="1"/><path d="M9 11.6 L9.8 8.6 L15.6 2.2 L17.6 4 L11.8 10.4 Z" fill="#f7c64a" stroke="#b8862a" stroke-width="0.8"/><path d="M9 11.6 L9.5 9.6 L10.8 10.8 Z" fill="#5a4a30"/></svg>
<div class="t" style="top:680px;font-size:11px;line-height:12px;color:#000;white-space:nowrap;letter-spacing:-0.340px;left:109.3px;">Módosít</div>
<div style="left:158px;top:673px;width:73px;height:25px;border:1px solid #123f7a;border-radius:3px;box-sizing:border-box;background:linear-gradient(#ffffff,#f1efec);"></div>
<svg style="left:170px;top:676px" width="20" height="18" viewBox="0 0 20 18"><g transform="translate(5,2)"><path d="M0.5 0.5 H7.5 L11.5 4.5 V13.5 H0.5 Z" fill="#fdfdfd" stroke="#8c8c8c" stroke-width="1"/><path d="M7.5 0.5 V4.5 H11.5" fill="#e8e8e8" stroke="#8c8c8c" stroke-width="1"/></g><path d="M4.2 6.799999999999999 L9.2 12.6 M9.2 6.799999999999999 L4.2 12.6" stroke="#e838c8" stroke-width="2.8" stroke-linecap="square"/><path d="M4.2 6.799999999999999 L9.2 12.6 M9.2 6.799999999999999 L4.2 12.6" stroke="#e81c24" stroke-width="1.7" stroke-linecap="square"/></svg>
<div class="t" style="top:680px;font-size:11px;line-height:12px;color:#000;white-space:nowrap;left:192.3px;"><span style="display:inline-block;transform:scaleX(0.9177);transform-origin:0 0;">Töröl</span></div>
<div style="left:1043px;top:673px;width:65px;height:25px;border:1px solid #123f7a;border-radius:3px;box-sizing:border-box;background:linear-gradient(#ffffff,#f1efec);"></div>
<svg style="left:1045px;top:676px" width="20" height="18" viewBox="0 0 20 18"><rect x="3.5" y="2.5" width="10" height="13" fill="#fff" stroke="#c8c8c8" stroke-width="1"/><path d="M3.5 2 V16 M13.5 2 V9" stroke="#e020d0" stroke-width="1"/><path d="M3 2.5 H14" stroke="#e020d0" stroke-width="1"/><rect x="1.5" y="6.5" width="14" height="8" fill="#e4e4e4" stroke="#8a8a8a" stroke-width="1"/><circle cx="8.5" cy="10" r="3.4" fill="#d8ecff" stroke="#3c86cc" stroke-width="1.3"/><circle cx="8.5" cy="10" r="1.3" fill="#7ab4e8"/><rect x="4" y="13.5" width="9" height="3.5" fill="#f6d860" stroke="#c09a28" stroke-width="0.8"/><path d="M11.5 13 L15.6 16.6" stroke="#e88a18" stroke-width="2"/></svg>
<div class="t" style="top:680px;font-size:11px;line-height:12px;color:#000;white-space:nowrap;letter-spacing:-0.202px;left:1063.6px;">Előnézet</div>
<div style="left:1110px;top:673px;width:73px;height:25px;border:1px solid #123f7a;border-radius:3px;box-sizing:border-box;background:linear-gradient(#ffffff,#f1efec);"></div>
<svg style="left:1118px;top:676px" width="20" height="18" viewBox="0 0 20 18"><g transform="translate(5.5,2)"><path d="M0.5 0.5 H7.5 L11.5 4.5 V13.5 H0.5 Z" fill="#fdfdfd" stroke="#8c8c8c" stroke-width="1"/><path d="M7.5 0.5 V4.5 H11.5" fill="#e8e8e8" stroke="#8c8c8c" stroke-width="1"/></g><path d="M4.6 10.6 L7.2 13.2 L12 8" fill="none" stroke="#2f9a22" stroke-width="2.8"/><path d="M4.9 10.6 L7.2 12.9 L11.7 8.2" fill="none" stroke="#9aea80" stroke-width="1.1"/></svg>
<div class="t" style="top:680px;font-size:11px;line-height:12px;color:#000;white-space:nowrap;letter-spacing:-0.299px;left:1140.3px;">Rögzít</div>
<div style="left:1185px;top:673px;width:73px;height:25px;border:1px solid #123f7a;border-radius:3px;box-sizing:border-box;background:linear-gradient(#ffffff,#f1efec);"></div>
<svg style="left:1188px;top:676px" width="20" height="18" viewBox="0 0 20 18"><g transform="translate(5.5,2)"><path d="M0.5 0.5 H7.5 L11.5 4.5 V13.5 H0.5 Z" fill="#fdfdfd" stroke="#8c8c8c" stroke-width="1"/><path d="M7.5 0.5 V4.5 H11.5" fill="#e8e8e8" stroke="#8c8c8c" stroke-width="1"/></g><path d="M5.1 7.0 L10.1 12.8 M10.1 7.0 L5.1 12.8" stroke="#e838c8" stroke-width="2.8" stroke-linecap="square"/><path d="M5.1 7.0 L10.1 12.8 M10.1 7.0 L5.1 12.8" stroke="#e81c24" stroke-width="1.7" stroke-linecap="square"/></svg>
<div class="t" style="top:680px;font-size:11px;line-height:12px;color:#000;white-space:nowrap;left:1210.5px;"><span style="display:inline-block;transform:scaleX(0.9268);transform-origin:0 0;">Mégsem</span></div>
<div class="t" style="top:674px;font-size:11px;line-height:12px;color:#000;white-space:nowrap;letter-spacing:-0.161px;left:308.3px;">Raktár</div>
<div class="t" style="top:687px;font-size:11px;line-height:12px;color:#000;white-space:nowrap;letter-spacing:0.177px;left:308.3px;">elővál.:</div>
<div style="left:351px;top:677px;width:159px;height:19px;background:#fff;border:1px solid #d6d6d6;box-sizing:border-box;"></div>
<div class="t" style="top:680px;font-size:11px;line-height:12px;color:#000;white-space:nowrap;letter-spacing:0.011px;left:352.5px;">Áru raktár</div>
<svg style="left:498px;top:684px" width="7" height="4" viewBox="0 0 7 4"><path d="M0 0 H7 L3.5 4 Z" fill="#4a9e34"/></svg>
<div style="left:525px;top:671px;width:13px;height:13px;background:#fff;border:1px solid #9fcf9a;box-sizing:border-box;"></div>
<svg style="left:526px;top:672px" width="11" height="11" viewBox="0 0 11 11"><path d="M1.5 5.5 L4.3 8.8 L9.5 1.5" fill="none" stroke="#3fa33f" stroke-width="1.5"/></svg>
<div style="left:525px;top:687px;width:13px;height:13px;background:#fff;border:1px solid #cfe3cc;box-sizing:border-box;"></div>
<div class="t" style="top:672px;font-size:11px;line-height:12px;color:#000;white-space:nowrap;letter-spacing:-0.073px;left:542.3px;">Helyesbített tételek megjelenítése</div>
<div class="t" style="top:687px;font-size:11px;line-height:12px;color:#000;white-space:nowrap;letter-spacing:-0.101px;left:542.3px;">Egyenlegadatok megjelenítése a bizonylaton</div>
<div style="left:4px;top:706px;width:1259px;height:19px;background:#f0f0f0;border-top:1px solid #dcdcdc;box-sizing:border-box;"></div>
<div class="t" style="top:711px;font-size:11px;line-height:12px;color:#000;white-space:nowrap;letter-spacing:0.171px;left:7.1px;">TAB - Mező váltás; F1 - Súgó; INS - Új; ENTER - Módosít; DEL - Töröl; F12 - Előnézet; Alt+V - Rögzít; ESC - Mégsem</div>
<svg style="left:1252px;top:715px" width="10" height="10" viewBox="0 0 10 10"><g fill="#b8b8b8"><rect x="7" y="1" width="2" height="2"/><rect x="4" y="4" width="2" height="2"/><rect x="7" y="4" width="2" height="2"/><rect x="1" y="7" width="2" height="2"/><rect x="4" y="7" width="2" height="2"/><rect x="7" y="7" width="2" height="2"/></g></svg>
</div>
</body></html>
